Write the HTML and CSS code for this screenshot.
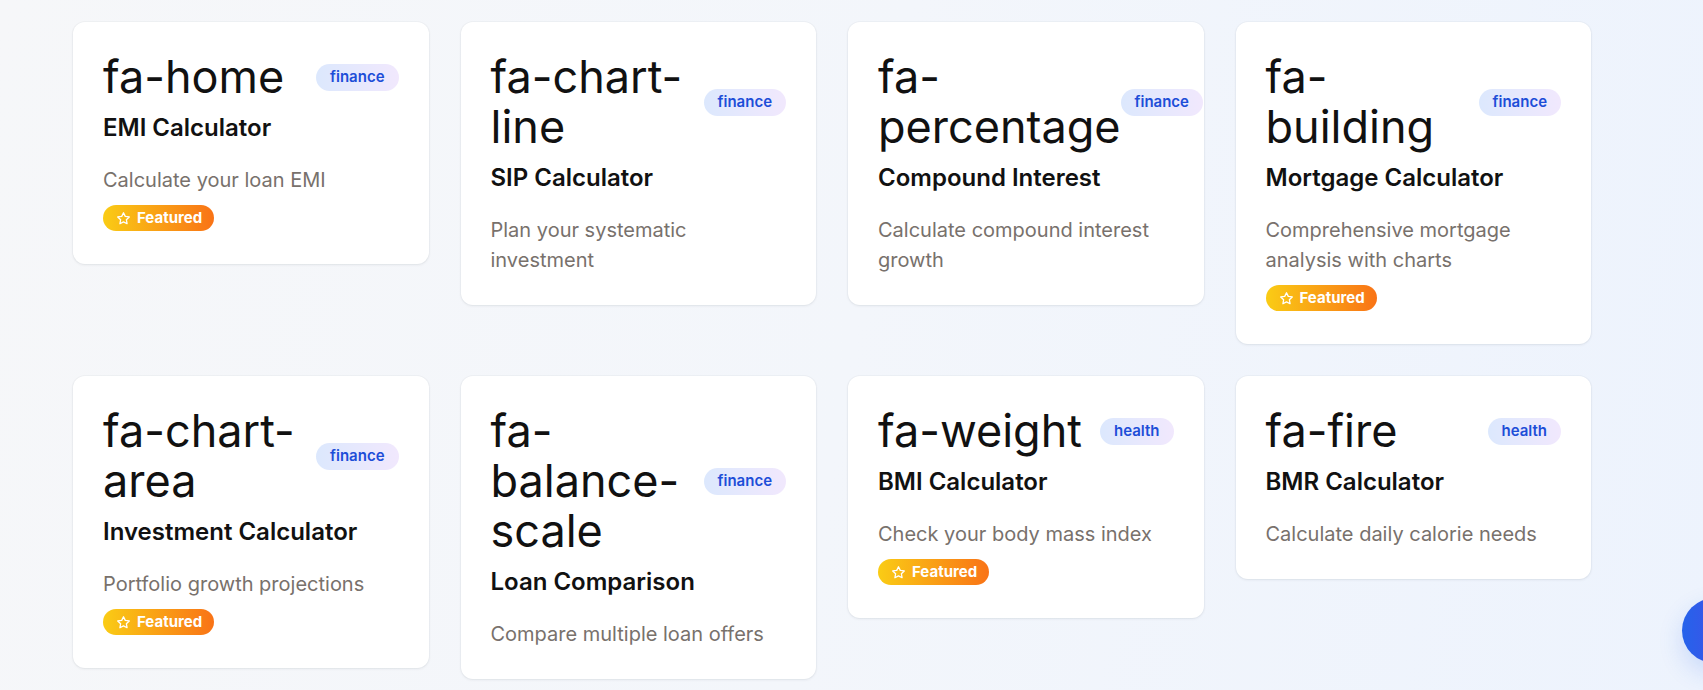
FILE: index.html
```html
<!DOCTYPE html>
<html lang="en">
<head>
<meta charset="utf-8">
<title>Calculators</title>
<link rel="stylesheet" href="styles.css">
</head>
<body>
<main class="grid">
  <article class="card">
    <div class="card-head"><div class="icon">fa-home</div><span class="cat">finance</span></div>
    <h3 class="title">EMI Calculator</h3>
    <p class="desc">Calculate your loan EMI</p>
    <span class="featured"><svg class="star" viewBox="0 0 24 24"><path d="M12 2.8l2.85 5.78 6.38.93-4.62 4.5 1.09 6.35L12 17.36l-5.7 3 1.09-6.35-4.62-4.5 6.38-.93z"/></svg>Featured</span>
  </article>
  <article class="card">
    <div class="card-head"><div class="icon">fa-chart-line</div><span class="cat">finance</span></div>
    <h3 class="title">SIP Calculator</h3>
    <p class="desc">Plan your systematic investment</p>
  </article>
  <article class="card">
    <div class="card-head"><div class="icon">fa-percentage</div><span class="cat">finance</span></div>
    <h3 class="title">Compound Interest</h3>
    <p class="desc">Calculate compound interest growth</p>
  </article>
  <article class="card">
    <div class="card-head"><div class="icon">fa-building</div><span class="cat">finance</span></div>
    <h3 class="title">Mortgage Calculator</h3>
    <p class="desc">Comprehensive mortgage analysis with charts</p>
    <span class="featured"><svg class="star" viewBox="0 0 24 24"><path d="M12 2.8l2.85 5.78 6.38.93-4.62 4.5 1.09 6.35L12 17.36l-5.7 3 1.09-6.35-4.62-4.5 6.38-.93z"/></svg>Featured</span>
  </article>
  <article class="card">
    <div class="card-head"><div class="icon">fa-chart-area</div><span class="cat">finance</span></div>
    <h3 class="title">Investment Calculator</h3>
    <p class="desc">Portfolio growth projections</p>
    <span class="featured"><svg class="star" viewBox="0 0 24 24"><path d="M12 2.8l2.85 5.78 6.38.93-4.62 4.5 1.09 6.35L12 17.36l-5.7 3 1.09-6.35-4.62-4.5 6.38-.93z"/></svg>Featured</span>
  </article>
  <article class="card">
    <div class="card-head"><div class="icon">fa-balance-scale</div><span class="cat">finance</span></div>
    <h3 class="title">Loan Comparison</h3>
    <p class="desc">Compare multiple loan offers</p>
  </article>
  <article class="card">
    <div class="card-head"><div class="icon">fa-weight</div><span class="cat">health</span></div>
    <h3 class="title">BMI Calculator</h3>
    <p class="desc">Check your body mass index</p>
    <span class="featured"><svg class="star" viewBox="0 0 24 24"><path d="M12 2.8l2.85 5.78 6.38.93-4.62 4.5 1.09 6.35L12 17.36l-5.7 3 1.09-6.35-4.62-4.5 6.38-.93z"/></svg>Featured</span>
  </article>
  <article class="card">
    <div class="card-head"><div class="icon">fa-fire</div><span class="cat">health</span></div>
    <h3 class="title">BMR Calculator</h3>
    <p class="desc">Calculate daily calorie needs</p>
  </article>
</main>
<button class="fab" aria-label="Open"></button>
</body>
</html>
```
FILE: styles.css
```css
html, body {
  margin: 0;
  height: 100%;
  overflow: hidden;
}
body {
  font-family: "Inter", "Noto Sans", sans-serif;
  background: linear-gradient(100deg, #f6f7f9 0%, #f3f6fb 50%, #edf3fd 100%);
  color: #111111;
}
.grid {
  display: grid;
  grid-template-columns: repeat(4, 355.5px);
  gap: 32px;
  align-items: start;
  padding: 22px 0 0 73px;
}
.card {
  background: #ffffff;
  border-radius: 12px;
  padding: 30px 30px 30px;
  box-shadow: 0 1px 3px rgba(15, 23, 42, 0.07), 0 0 0 1px rgba(15, 23, 42, 0.025);
  display: flex;
  flex-direction: column;
  align-items: flex-start;
}
.card-head {
  display: flex;
  justify-content: space-between;
  align-items: center;
  align-self: stretch;
  margin-bottom: 8px;
}
.icon {
  font-size: 45px;
  line-height: 50px;
  font-weight: 400;
  color: #111111;
}
.cat {
  flex-shrink: 0;
  white-space: nowrap;
  font-size: 15px;
  line-height: 20px;
  font-weight: 600;
  color: #1d4ed8;
  padding: 3.5px 14px;
  border-radius: 999px;
  background: linear-gradient(90deg, #dce8fd 0%, #f1e8fd 100%);
}
.title {
  margin: 0 0 20px;
  font-size: 24px;
  line-height: 35px;
  font-weight: 600;
  color: #111111;
}
.desc {
  margin: 0;
  font-size: 20px;
  line-height: 30px;
  color: #78716c;
}
.featured {
  margin: 10px 0 3px;
  display: inline-flex;
  align-items: center;
  gap: 6px;
  padding: 3px 12px 3px 13px;
  border-radius: 999px;
  background: linear-gradient(90deg, #facc15 0%, #f97316 100%);
  color: #ffffff;
  font-size: 15px;
  line-height: 20px;
  font-weight: 700;
}
.star {
  width: 15px;
  height: 15px;
  fill: none;
  stroke: #ffffff;
  stroke-width: 2.1;
  stroke-linejoin: round;
}
.fab {
  position: fixed;
  left: 1682px;
  top: 598px;
  width: 65px;
  height: 65px;
  border: 0;
  border-radius: 50%;
  background: linear-gradient(90deg, #2563eb 0%, #4f46e5 100%);
  box-shadow: 0 10px 25px rgba(37, 99, 235, 0.18);
  padding: 0;
}
```
